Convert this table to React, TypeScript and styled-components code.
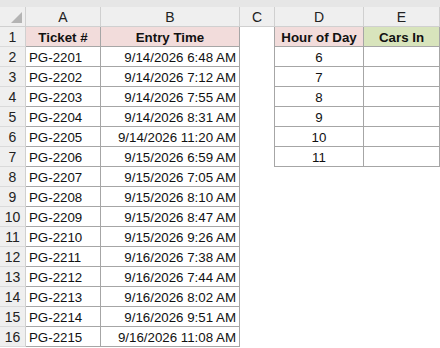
import React from "react";
import styled, { createGlobalStyle, css } from "styled-components";

const Global = createGlobalStyle`
  html, body { margin: 0; padding: 0; background: #ffffff; }
  body { font-family: "Liberation Sans", Arial, sans-serif; }
`;

const COLS = "26px 75px 139px 35px 89px 76px";
const GRID = "#a6a6a6";
const HDR_LINE = "#d0d0d0";

const Sheet = styled.div`
  width: 440px;
  height: 348px;
  overflow: hidden;
  background: #ffffff;
  display: flex;
  flex-direction: column;
`;

const TopStrip = styled.div`
  height: 7px;
  background: #e6e6e6;
  flex: none;
`;

const Row = styled.div`
  display: grid;
  grid-template-columns: ${COLS};
  height: 20px;
  flex: none;
`;

const Corner = styled.div`
  background: #efefef;
  border-right: 1px solid ${HDR_LINE};
  border-bottom: 1px solid ${HDR_LINE};
  box-sizing: border-box;
  position: relative;
  svg { position: absolute; right: 3px; bottom: 3px; }
`;

const ColHead = styled.div`
  background: #efefef;
  border-right: 1px solid ${HDR_LINE};
  border-bottom: 1px solid ${HDR_LINE};
  box-sizing: border-box;
  display: flex;
  align-items: center;
  justify-content: center;
  font-size: 14px;
  color: #222222;
  padding-top: 1px;
`;

const RowHead = styled.div`
  background: #efefef;
  border-right: 1px solid ${HDR_LINE};
  border-bottom: 1px solid #dadada;
  box-sizing: border-box;
  display: flex;
  align-items: center;
  justify-content: center;
  font-size: 14px;
  color: #222222;
  padding-top: 1px;
`;

type Align = "left" | "right" | "center";

const Cell = styled.div<{
  $align?: Align;
  $bg?: string;
  $bold?: boolean;
  $bordered?: boolean;
  $leftLine?: boolean;
}>`
  box-sizing: border-box;
  background: ${(p) => p.$bg || "#ffffff"};
  display: flex;
  align-items: center;
  justify-content: ${(p) =>
    p.$align === "right" ? "flex-end" : p.$align === "center" ? "center" : "flex-start"};
  padding: 1px 3px 0 3px;
  font-size: 13.3px;
  font-weight: ${(p) => (p.$bold ? 700 : 400)};
  color: #111111;
  white-space: nowrap;
  overflow: hidden;
  ${(p) =>
    p.$bordered &&
    css`
      border-right: 1px solid ${GRID};
      border-bottom: 1px solid ${GRID};
    `}
  ${(p) =>
    p.$leftLine &&
    css`
      border-right: 1px solid ${GRID};
    `}
`;

const tickets: [string, string][] = [
  ["PG-2201", "9/14/2026 6:48 AM"],
  ["PG-2202", "9/14/2026 7:12 AM"],
  ["PG-2203", "9/14/2026 7:55 AM"],
  ["PG-2204", "9/14/2026 8:31 AM"],
  ["PG-2205", "9/14/2026 11:20 AM"],
  ["PG-2206", "9/15/2026 6:59 AM"],
  ["PG-2207", "9/15/2026 7:05 AM"],
  ["PG-2208", "9/15/2026 8:10 AM"],
  ["PG-2209", "9/15/2026 8:47 AM"],
  ["PG-2210", "9/15/2026 9:26 AM"],
  ["PG-2211", "9/16/2026 7:38 AM"],
  ["PG-2212", "9/16/2026 7:44 AM"],
  ["PG-2213", "9/16/2026 8:02 AM"],
  ["PG-2214", "9/16/2026 9:51 AM"],
  ["PG-2215", "9/16/2026 11:08 AM"],
];

const hours = [6, 7, 8, 9, 10, 11];

export default function App() {
  return (
    <>
      <Global />
      <Sheet>
        <TopStrip />
        <Row>
          <Corner>
            <svg width="11" height="11" viewBox="0 0 11 11">
              <polygon points="11,0 11,11 0,11" fill="#b4b4b4" />
            </svg>
          </Corner>
          {["A", "B", "C", "D", "E"].map((c) => (
            <ColHead key={c}>{c}</ColHead>
          ))}
        </Row>
        <Row>
          <RowHead>1</RowHead>
          <Cell $align="center" $bg="#f2dcdb" $bold $bordered>
            Ticket #
          </Cell>
          <Cell $align="center" $bg="#f2dcdb" $bold $bordered>
            Entry Time
          </Cell>
          <Cell $leftLine />
          <Cell $align="center" $bg="#f2dcdb" $bold $bordered>
            Hour of Day
          </Cell>
          <Cell $align="center" $bg="#d8e4bc" $bold $bordered>
            Cars In
          </Cell>
        </Row>
        {tickets.map(([t, d], i) => {
          const h = hours[i];
          const inTable = i < hours.length;
          return (
            <Row key={t}>
              <RowHead>{i + 2}</RowHead>
              <Cell $bordered>{t}</Cell>
              <Cell $align="right" $bordered>
                {d}
              </Cell>
              <Cell $leftLine={inTable} />
              {inTable ? (
                <>
                  <Cell $align="center" $bordered>
                    {h}
                  </Cell>
                  <Cell $bordered />
                </>
              ) : (
                <>
                  <Cell />
                  <Cell />
                </>
              )}
            </Row>
          );
        })}
      </Sheet>
    </>
  );
}
